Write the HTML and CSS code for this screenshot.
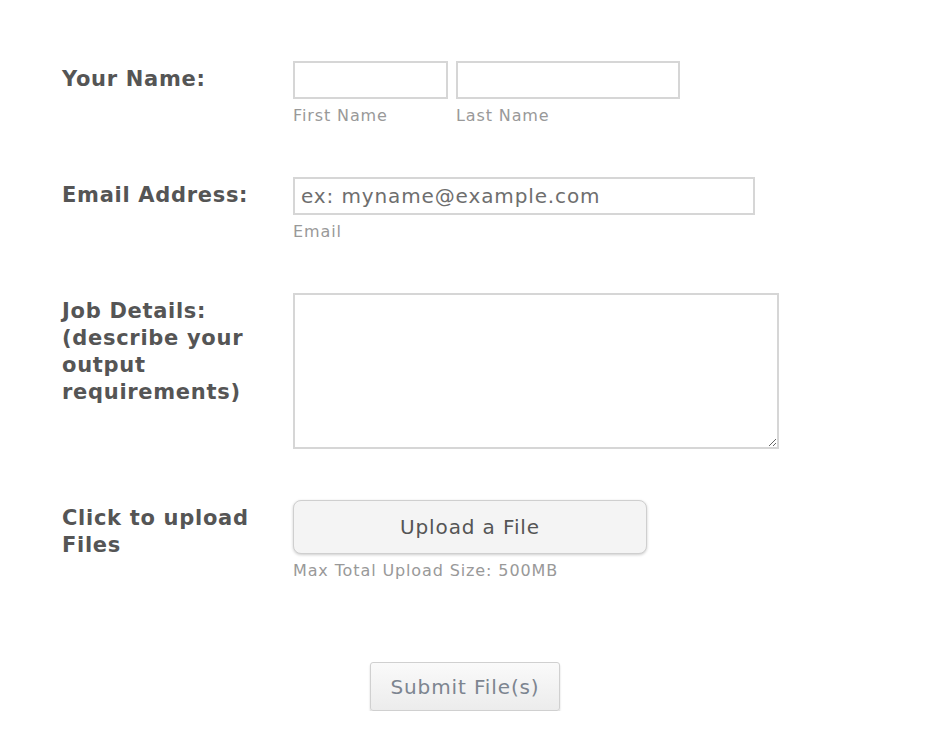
FILE: index.html
```html
<!DOCTYPE html>
<html lang="en">
<head>
    <meta charset="UTF-8">
    <meta name="viewport" content="width=device-width, initial-scale=1.0">
    <title>Upload Files</title>
    <link rel="stylesheet" href="styles.css">
</head>
<body>
    <form class="upload-form">
        <div class="form-row">
            <label class="row-label">Your Name:</label>
            <div class="field name-field">
                <div class="sub">
                    <input type="text" class="first">
                    <span class="sub-label">First Name</span>
                </div>
                <div class="sub">
                    <input type="text" class="last">
                    <span class="sub-label">Last Name</span>
                </div>
            </div>
        </div>
        <div class="form-row">
            <label class="row-label">Email Address:</label>
            <div class="field">
                <input type="email" class="email" placeholder="ex: myname@example.com">
                <span class="sub-label">Email</span>
            </div>
        </div>
        <div class="form-row">
            <label class="row-label">Job Details: (describe your output requirements)</label>
            <div class="field">
                <textarea></textarea>
            </div>
        </div>
        <div class="form-row">
            <label class="row-label">Click to upload Files</label>
            <div class="field">
                <button type="button" class="upload-btn">Upload a File</button>
                <span class="sub-label">Max Total Upload Size: 500MB</span>
            </div>
        </div>
        <div class="submit-row">
            <button type="submit" class="submit-btn">Submit File(s)</button>
        </div>
    </form>
</body>
</html>
```

FILE: styles.css
```css
*{
    margin: 0;
    padding: 0;
    box-sizing: border-box;
}
body{
    background: #fff;
    font-family: "DejaVu Sans", Verdana, sans-serif;
    color: #555;
    letter-spacing: 0.055em;
}
.upload-form{
    padding: 61px 0 0 62px;
}
.form-row{
    display: flex;
    align-items: flex-start;
    margin-bottom: 51px;
}
.row-label{
    width: 231px;
    padding: 5px 10px 0 0;
    font-size: 21px;
    font-weight: bold;
    line-height: 27px;
    letter-spacing: 0.7px;
    color: #555;
}
.field{
    display: flex;
    flex-direction: column;
}
.name-field{
    flex-direction: row;
    gap: 8px;
}
.sub{
    display: flex;
    flex-direction: column;
}
.field :where(input, textarea){
    border: 2px solid #d6d6d6;
    outline: none;
    font-family: inherit;
    letter-spacing: inherit;
    background: #fff;
}
.field input{
    height: 38px;
    font-size: 20px;
    padding: 0 6px;
    color: #555;
}
.field input::placeholder{
    color: #6e6e6e;
}
.first{ width: 155px; }
.last{ width: 224px; }
.email{ width: 462px; }
.field textarea{
    width: 486px;
    height: 156px;
    resize: both;
}
.sub-label{
    margin-top: 7px;
    font-size: 16px;
    line-height: 20px;
    color: #999;
}
.upload-btn{
    width: 354px;
    height: 54px;
    border: 1px solid #cfcfcf;
    border-radius: 8px;
    background: #f4f4f4;
    box-shadow: 0 1px 3px rgba(0,0,0,0.2);
    font-family: inherit;
    letter-spacing: inherit;
    font-size: 20px;
    color: #555;
    cursor: pointer;
}
.submit-row{
    display: flex;
    justify-content: center;
    margin: 81px 0 0 -62px;
}
.submit-btn{
    width: 190px;
    height: 49px;
    border: 1px solid #d0d0d0;
    border-radius: 3px;
    background: linear-gradient(#fafafa, #ececec);
    box-shadow: 0 2px 2px rgba(0,0,0,0.18);
    font-family: inherit;
    letter-spacing: inherit;
    font-size: 20px;
    color: #7d8590;
    cursor: pointer;
}
```
